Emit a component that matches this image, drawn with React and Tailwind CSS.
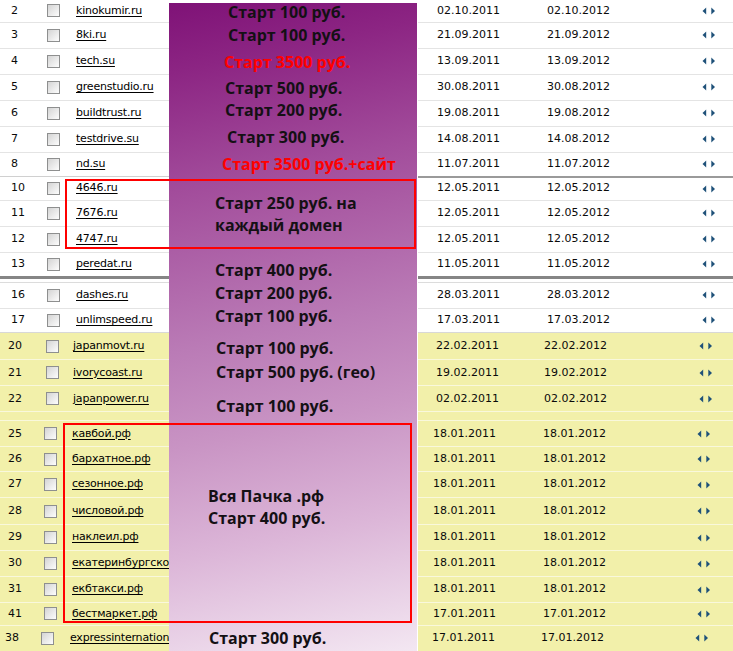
function Checkbox() {
  return (
    <span className="inline-block w-[13px] h-[13px] shrink-0 border border-[#8e8f8f] bg-[linear-gradient(135deg,#d4d4d4,#fdfdfd)]" />
  );
}

function Arrows() {
  return (
    <svg width="14" height="8" viewBox="0 0 14 8" className="shrink-0">
      <path d="M4.2 0.5 L0.5 4 L4.2 7.5 Z" fill="#1f5179" />
      <path d="M9.3 0.5 L13 4 L9.3 7.5 Z" fill="#1f5179" />
    </svg>
  );
}

// left / right layouts per block of the table
const L = {
  a: { pad: "pl-[11px]", num: "w-[36px]", gap: "mr-[16px]" },
  b: { pad: "pl-[8px]", num: "w-[38px]", gap: "mr-[14px]" },
  c: { pad: "pl-[8px]", num: "w-[36px]", gap: "mr-[15px]" },
  d: { pad: "pl-[5px]", num: "w-[36px]", gap: "mr-[16px]" },
};

const R = {
  a: { pad: "pl-[19px]", d1: "w-[110px]", d2: "w-[155px]" },
  b: { pad: "pl-[18px]", d1: "w-[108px]", d2: "w-[155px]" },
  c: { pad: "pl-[15px]", d1: "w-[110px]", d2: "w-[154px]" },
  d: { pad: "pl-[14px]", d1: "w-[109px]", d2: "w-[154px]" },
};

const rows = [
  { n: "2", dom: "kinokumir.ru", d1: "02.10.2011", d2: "02.10.2012", h: "h-[23px]", v: "a", line: "border-b border-[#e4e4e4]" },
  { n: "3", dom: "8ki.ru", d1: "21.09.2011", d2: "21.09.2012", h: "h-[26px]", v: "a", line: "border-b border-[#e4e4e4]" },
  { n: "4", dom: "tech.su", d1: "13.09.2011", d2: "13.09.2012", h: "h-[26px]", v: "a", line: "border-b border-[#e4e4e4]" },
  { n: "5", dom: "greenstudio.ru", d1: "30.08.2011", d2: "30.08.2012", h: "h-[26px]", v: "a", line: "border-b border-[#e4e4e4]" },
  { n: "6", dom: "buildtrust.ru", d1: "19.08.2011", d2: "19.08.2012", h: "h-[26px]", v: "a", line: "border-b border-[#e4e4e4]" },
  { n: "7", dom: "testdrive.su", d1: "14.08.2011", d2: "14.08.2012", h: "h-[26px]", v: "a", line: "border-b border-[#e4e4e4]" },
  { n: "8", dom: "nd.su", d1: "11.07.2011", d2: "11.07.2012", h: "h-[23px]", v: "a", line: "" },
  { sep: "thin" },
  { n: "10", dom: "4646.ru", d1: "12.05.2011", d2: "12.05.2012", h: "h-[23px]", v: "a", line: "border-b border-[#e4e4e4]" },
  { n: "11", dom: "7676.ru", d1: "12.05.2011", d2: "12.05.2012", h: "h-[26px]", v: "a", line: "border-b border-[#e4e4e4]" },
  { n: "12", dom: "4747.ru", d1: "12.05.2011", d2: "12.05.2012", h: "h-[26px]", v: "a", line: "border-b border-[#e4e4e4]" },
  { n: "13", dom: "peredat.ru", d1: "11.05.2011", d2: "11.05.2012", h: "h-[23px]", v: "a", line: "" },
  { sep: "thick" },
  { n: "16", dom: "dashes.ru", d1: "28.03.2011", d2: "28.03.2012", h: "h-[26px]", v: "a", line: "border-b border-[#e4e4e4]" },
  { n: "17", dom: "unlimspeed.ru", d1: "17.03.2011", d2: "17.03.2012", h: "h-[25px]", v: "a", line: "border-b border-[#d8d8d8]" },
  { n: "20", dom: "japanmovt.ru", d1: "22.02.2011", d2: "22.02.2012", h: "h-[27px]", v: "b", y: true, line: "border-b border-[#f9f8dc]" },
  { n: "21", dom: "ivorycoast.ru", d1: "19.02.2011", d2: "19.02.2012", h: "h-[26px]", v: "b", y: true, line: "border-b border-[#f9f8dc]" },
  { n: "22", dom: "japanpower.ru", d1: "02.02.2011", d2: "02.02.2012", h: "h-[26px]", v: "b", y: true, line: "border-b border-[#f9f8dc]" },
  { blank: true },
  { n: "25", dom: "кавбой.рф", d1: "18.01.2011", d2: "18.01.2012", h: "h-[26px]", v: "c", y: true, line: "border-b border-[#f9f8dc]" },
  { n: "26", dom: "бархатное.рф", d1: "18.01.2011", d2: "18.01.2012", h: "h-[25px]", v: "c", y: true, line: "border-b border-[#f9f8dc]" },
  { n: "27", dom: "сезонное.рф", d1: "18.01.2011", d2: "18.01.2012", h: "h-[26px]", v: "c", y: true, line: "border-b border-[#f9f8dc]" },
  { n: "28", dom: "числовой.рф", d1: "18.01.2011", d2: "18.01.2012", h: "h-[27px]", v: "c", y: true, line: "border-b border-[#f9f8dc]" },
  { n: "29", dom: "наклеил.рф", d1: "18.01.2011", d2: "18.01.2012", h: "h-[26px]", v: "c", y: true, line: "border-b border-[#f9f8dc]" },
  { n: "30", dom: "екатеринбургское.рф", d1: "18.01.2011", d2: "18.01.2012", h: "h-[26px]", v: "c", y: true, line: "border-b border-[#f9f8dc]" },
  { n: "31", dom: "екбтакси.рф", d1: "18.01.2011", d2: "18.01.2012", h: "h-[26px]", v: "c", y: true, line: "border-b border-[#f9f8dc]" },
  { n: "41", dom: "бестмаркет.рф", d1: "17.01.2011", d2: "17.01.2012", h: "h-[23px]", v: "c", y: true, line: "border-b border-[#f9f8dc]" },
  { n: "38", dom: "expressinternational.ru", d1: "17.01.2011", d2: "17.01.2012", h: "h-[25px]", v: "d", y: true, line: "" },
];

const notes = [
  { t: "Старт 100 руб.", cls: "mt-0 ml-[59px]" },
  { t: "Старт 100 руб.", cls: "mt-[5px] ml-[59px]" },
  { t: "Старт 3500 руб.", cls: "mt-[9px] ml-[55px] text-[#ff0000]" },
  { t: "Старт 500 руб.", cls: "mt-[8px] ml-[56px]" },
  { t: "Старт 200 руб.", cls: "mt-[4px] ml-[56px]" },
  { t: "Старт 300 руб.", cls: "mt-[9px] ml-[58px]" },
  { t: "Старт 3500 руб.+сайт", cls: "mt-[9px] ml-[53px] text-[#ff0000]" },
  { t: "Старт 250 руб. на", cls: "mt-[21px] ml-[46px]" },
  { t: "каждый домен", cls: "mt-[4px] ml-[46px]" },
  { t: "Старт 400 руб.", cls: "mt-[27px] ml-[46px]" },
  { t: "Старт 200 руб.", cls: "mt-[5px] ml-[46px]" },
  { t: "Старт 100 руб.", cls: "mt-[5px] ml-[46px]" },
  { t: "Старт 100 руб.", cls: "mt-[14px] ml-[47px]" },
  { t: "Старт 500 руб. (гео)", cls: "mt-[6px] ml-[47px]" },
  { t: "Старт 100 руб.", cls: "mt-[16px] ml-[47px]" },
  { t: "Вся Пачка .рф", cls: "mt-[72px] ml-[39px]" },
  { t: "Старт 400 руб.", cls: "mt-[4px] ml-[39px]" },
  { t: "Старт 300 руб.", cls: "mt-[102px] ml-[40px]" },
];

function LeftRow({ r }) {
  if (r.sep === "thin") return <div className="h-[2px] border-t border-[#d0d0d0]" />;
  if (r.sep === "thick")
    return <div className="h-[7px] border-t-[3px] border-b border-t-[#858585] border-b-[#dcdcdc]" />;
  if (r.blank) return <div className="h-[9px] bg-[#f2f0aa] border-b border-[#f9f8dc]" />;
  const v = L[r.v];
  return (
    <div className={`flex items-center overflow-hidden whitespace-nowrap ${r.h} ${r.line} ${v.pad} ${r.y ? "bg-[#f2f0aa]" : "bg-white"}`}>
      <span className={`${v.num} shrink-0`}>{r.n}</span>
      <Checkbox />
      <span className={`${v.gap} shrink-0`} />
      <a href="#d" className="underline underline-offset-2 tracking-[-0.2px] text-black">{r.dom}</a>
    </div>
  );
}

function RightRow({ r }) {
  if (r.sep === "thin") return <div className="h-[2px] bg-[#9a9a9a]" />;
  if (r.sep === "thick")
    return <div className="h-[7px] border-t-[3px] border-b border-t-[#858585] border-b-[#dcdcdc]" />;
  if (r.blank) return <div className="h-[9px] bg-[#f2f0aa] border-b border-[#f9f8dc]" />;
  const v = R[r.v];
  return (
    <div className={`flex items-center whitespace-nowrap ${r.h} ${r.line} ${v.pad} ${r.y ? "bg-[#f2f0aa]" : "bg-white"}`}>
      <span className={`${v.d1} shrink-0`}>{r.d1}</span>
      <span className={`${v.d2} shrink-0`}>{r.d2}</span>
      <Arrows />
    </div>
  );
}

export default function App() {
  return (
    <div className="relative flex w-[733px] h-[651px] overflow-hidden bg-white text-[11px] text-[#0a0a0a] font-['DejaVu_Sans',sans-serif]">
      <div className="w-[169px] shrink-0 flex flex-col">
        {rows.map((r, i) => (
          <LeftRow key={i} r={r} />
        ))}
      </div>

      <div className="w-[248px] shrink-0 mt-[3px] flex flex-col bg-[linear-gradient(168deg,#7f1277_0%,#8c2583_10%,#a24c9b_27%,#ba7bb6_50%,#c994c4_64%,#dcb6d8_80%,#f3e7f2_100%)] font-['Open_Sans',sans-serif] font-bold text-[16px] leading-[18px] text-[#141014] whitespace-nowrap">
        {notes.map((n, i) => (
          <div key={i} className={n.cls}>
            {n.t}
          </div>
        ))}
      </div>

      <div className="flex-1 flex flex-col border-l border-white">
        {rows.map((r, i) => (
          <RightRow key={i} r={r} />
        ))}
      </div>

      <div className="absolute left-[65px] top-[179px] w-[351px] h-[70px] border-2 border-[#ff0000]" />
      <div className="absolute left-[63px] top-[423px] w-[349px] h-[200px] border-2 border-[#ff0000]" />
    </div>
  );
}
